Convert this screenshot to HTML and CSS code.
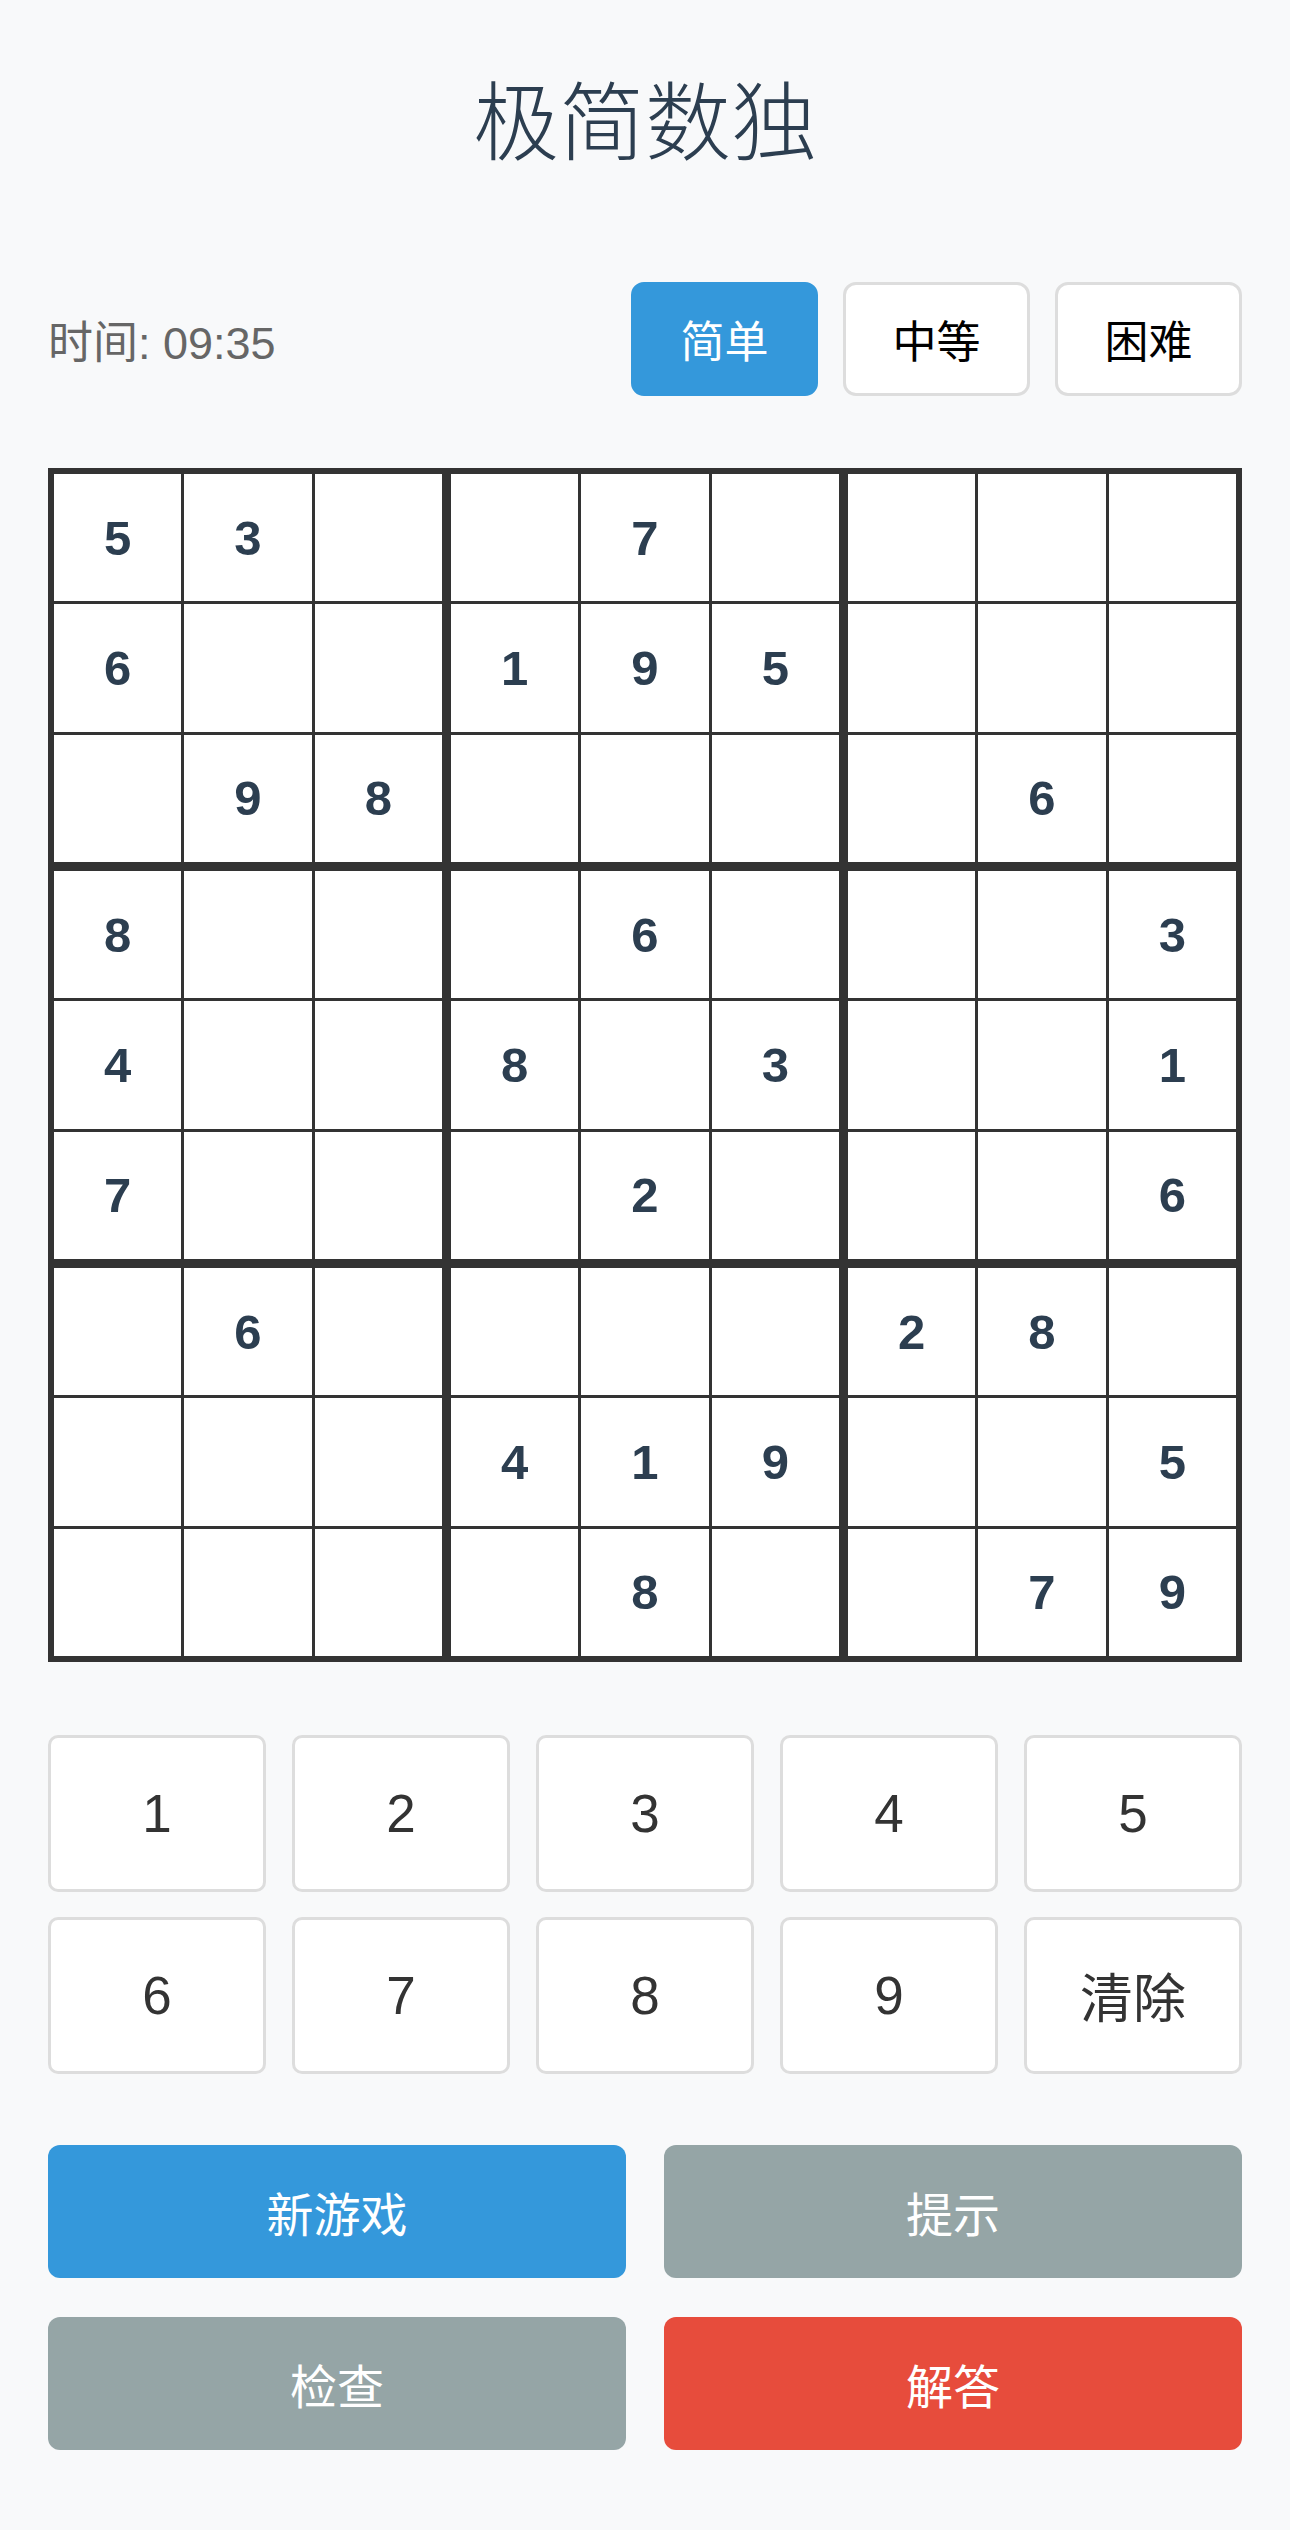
FILE: index.html
```html
<!DOCTYPE html>
<html lang="zh-CN">
<head>
<meta charset="utf-8">
<title>极简数独</title>
<link rel="stylesheet" href="styles.css">
</head>
<body>
<div class="page">
  <h1 class="title">极简数独</h1>

  <div class="controls">
    <div class="timer">时间: 09:35</div>
    <div class="levels">
      <button class="level active">简单</button>
      <button class="level">中等</button>
      <button class="level">困难</button>
    </div>
  </div>

  <div class="board">
    <div class="box">
      <div class="cell">5</div><div class="cell">3</div><div class="cell"></div>
      <div class="cell">6</div><div class="cell"></div><div class="cell"></div>
      <div class="cell"></div><div class="cell">9</div><div class="cell">8</div>
    </div>
    <div class="box">
      <div class="cell"></div><div class="cell">7</div><div class="cell"></div>
      <div class="cell">1</div><div class="cell">9</div><div class="cell">5</div>
      <div class="cell"></div><div class="cell"></div><div class="cell"></div>
    </div>
    <div class="box">
      <div class="cell"></div><div class="cell"></div><div class="cell"></div>
      <div class="cell"></div><div class="cell"></div><div class="cell"></div>
      <div class="cell"></div><div class="cell">6</div><div class="cell"></div>
    </div>
    <div class="box">
      <div class="cell">8</div><div class="cell"></div><div class="cell"></div>
      <div class="cell">4</div><div class="cell"></div><div class="cell"></div>
      <div class="cell">7</div><div class="cell"></div><div class="cell"></div>
    </div>
    <div class="box">
      <div class="cell"></div><div class="cell">6</div><div class="cell"></div>
      <div class="cell">8</div><div class="cell"></div><div class="cell">3</div>
      <div class="cell"></div><div class="cell">2</div><div class="cell"></div>
    </div>
    <div class="box">
      <div class="cell"></div><div class="cell"></div><div class="cell">3</div>
      <div class="cell"></div><div class="cell"></div><div class="cell">1</div>
      <div class="cell"></div><div class="cell"></div><div class="cell">6</div>
    </div>
    <div class="box">
      <div class="cell"></div><div class="cell">6</div><div class="cell"></div>
      <div class="cell"></div><div class="cell"></div><div class="cell"></div>
      <div class="cell"></div><div class="cell"></div><div class="cell"></div>
    </div>
    <div class="box">
      <div class="cell"></div><div class="cell"></div><div class="cell"></div>
      <div class="cell">4</div><div class="cell">1</div><div class="cell">9</div>
      <div class="cell"></div><div class="cell">8</div><div class="cell"></div>
    </div>
    <div class="box">
      <div class="cell">2</div><div class="cell">8</div><div class="cell"></div>
      <div class="cell"></div><div class="cell"></div><div class="cell">5</div>
      <div class="cell"></div><div class="cell">7</div><div class="cell">9</div>
    </div>
  </div>

  <div class="numpad">
    <button class="key">1</button>
    <button class="key">2</button>
    <button class="key">3</button>
    <button class="key">4</button>
    <button class="key">5</button>
    <button class="key">6</button>
    <button class="key">7</button>
    <button class="key">8</button>
    <button class="key">9</button>
    <button class="key">清除</button>
  </div>

  <div class="actions">
    <button class="action blue">新游戏</button>
    <button class="action gray">提示</button>
    <button class="action gray">检查</button>
    <button class="action red">解答</button>
  </div>
</div>
</body>
</html>
```

FILE: styles.css
```css
html, body {
  margin: 0;
  padding: 0;
  background: #f8f9fa;
}

body {
  font-family: "Liberation Sans", "Noto Sans CJK SC", sans-serif;
}

.page {
  padding: 0 48px;
  height: 2530px;
  box-sizing: border-box;
  overflow: hidden;
}

.title {
  margin: 74px 0 0;
  font-family: "Noto Sans CJK SC", sans-serif;
  font-size: 86px;
  line-height: 86px;
  font-weight: 300;
  color: #2c3e50;
  text-align: center;
}

.controls {
  margin-top: 122px;
  height: 114px;
  display: flex;
  align-items: center;
  justify-content: space-between;
}

.timer {
  font-size: 45px;
  color: #666;
}

.levels {
  display: flex;
  gap: 25px;
  height: 100%;
}

.level {
  width: 187px;
  height: 114px;
  box-sizing: border-box;
  border: 3px solid #ddd;
  border-radius: 13px;
  background: #fff;
  color: #000;
  font-family: "Noto Sans CJK SC", sans-serif;
  font-size: 44px;
  padding: 0;
  margin: 0;
}

.level.active {
  background: #3498db;
  border-color: #3498db;
  color: #fff;
}

.board {
  margin-top: 72px;
  display: grid;
  grid-template-columns: repeat(3, minmax(0, 1fr));
  gap: 9px;
  background: #333;
  border: 6px solid #333;
}

.box {
  display: grid;
  grid-template-columns: repeat(3, minmax(0, 1fr));
  grid-auto-rows: 127.33px;
  gap: 3px;
  min-width: 0;
}

.cell {
  background: #fff;
  display: flex;
  align-items: center;
  justify-content: center;
  font-size: 49px;
  font-weight: bold;
  color: #2c3e50;
  min-width: 0;
}

.numpad {
  margin-top: 73px;
  display: grid;
  grid-template-columns: repeat(5, minmax(0, 1fr));
  column-gap: 26px;
  row-gap: 25px;
}

.key {
  height: 157px;
  box-sizing: border-box;
  border: 3px solid #ddd;
  border-radius: 10px;
  background: #fff;
  color: #333;
  font-family: "Liberation Sans", "Noto Sans CJK SC", sans-serif;
  font-size: 53px;
  padding: 0;
  margin: 0;
}

.actions {
  margin-top: 71px;
  display: grid;
  grid-template-columns: repeat(2, minmax(0, 1fr));
  column-gap: 38px;
  row-gap: 39px;
}

.action {
  height: 133px;
  border: none;
  border-radius: 12px;
  color: #fff;
  font-family: "Noto Sans CJK SC", sans-serif;
  font-size: 47px;
  padding: 0;
  margin: 0;
}

.action.blue { background: #3498db; }
.action.gray { background: #95a5a6; }
.action.red { background: #e74c3c; }
```
